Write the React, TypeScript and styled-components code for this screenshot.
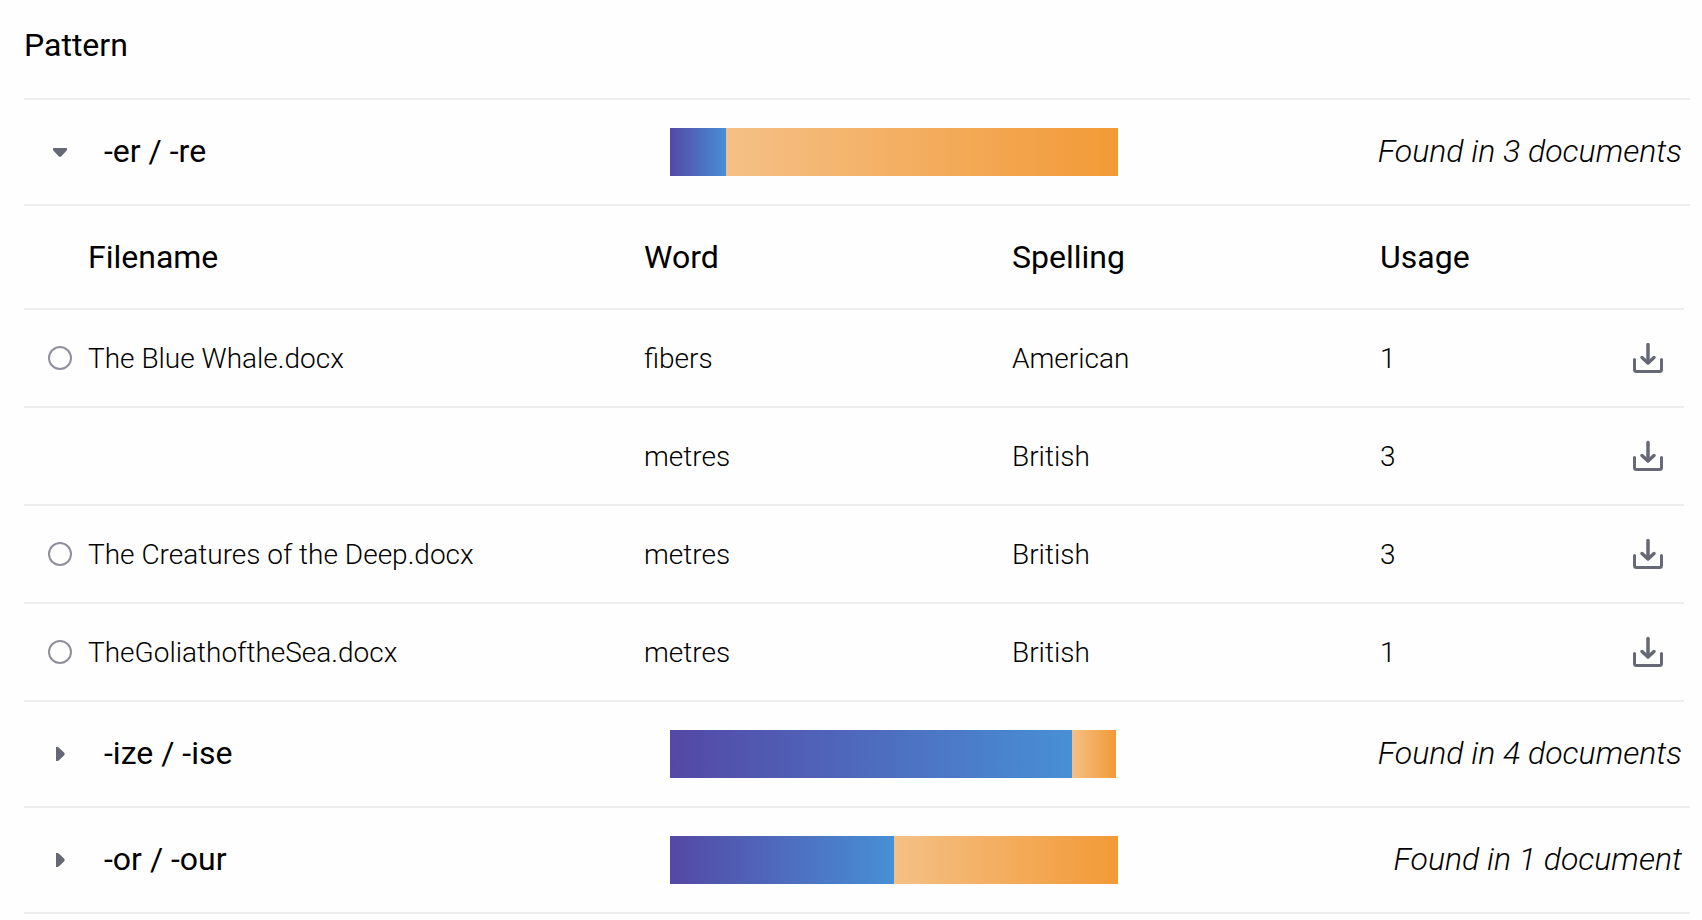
import React, { useState } from "react";
import styled, { createGlobalStyle } from "styled-components";

const GlobalStyle = createGlobalStyle`
  *, *::before, *::after { box-sizing: border-box; }
  body {
    margin: 0;
    background: #fefefe;
    color: #000;
    font-family: Roboto, "Liberation Sans", sans-serif;
    font-size: 32px;
    line-height: 42px;
  }
`;

const line = "2px solid #eee";
const iconColor = "#666876";

const Page = styled.main`
  padding: 0 12px 0 24px;
`;

const Title = styled.h1`
  margin: 0;
  padding: 24px 0 32px;
  border-bottom: ${line};
  font-size: 32px;
  font-weight: 400;
`;

const PatternHeader = styled.div`
  display: grid;
  grid-template-columns: 323fr 224fr 286fr;
  align-items: center;
  padding: 28px 0;
  border-bottom: ${line};
`;

const PatternName = styled.div`
  display: flex;
  align-items: center;
  gap: 20px;
  padding-left: 12px;
`;

const PatternLabel = styled.h2`
  margin: 0;
  padding-bottom: 2px;
  font-size: 32px;
  font-weight: 400;
`;

const IconButton = styled.button`
  display: flex;
  align-items: center;
  justify-content: center;
  width: 48px;
  height: 48px;
  padding: 0;
  border: 0;
  background: none;
  color: ${iconColor};
  cursor: pointer;
`;

const Bar = styled.div`
  display: flex;
  height: 48px;
`;

const Segment = styled.div<{ $tone: "american" | "british" }>`
  background: ${({ $tone }) =>
    $tone === "american"
      ? "linear-gradient(to right, #5448a5, #488fd6)"
      : "linear-gradient(to right, #f4c086, #f29a36)"};
`;

const Found = styled.em`
  padding: 0 8px 2px 0;
  font-weight: 300;
  text-align: right;
`;

const Table = styled.table`
  display: block;
  margin-right: 6px;
`;

const Section = styled.thead`
  display: block;
`;

const Row = styled.tr`
  display: grid;
  grid-template-columns: 64px 139fr 92fr 92fr 58fr 72px;
  align-items: center;
  border-bottom: ${line};
`;

const HeadCell = styled.th`
  padding: 30px 0;
  font-weight: 400;
  text-align: left;
`;

const Cell = styled.td`
  padding: 2px 0 0;
  font-size: 28px;
  font-weight: 300;
`;

const ControlCell = styled.td`
  display: flex;
  align-items: center;
  justify-content: center;
  height: 96px;
  padding: 0;
`;

const SelectCell = styled(ControlCell)`
  padding-left: 8px;
`;

const Radio = styled.input`
  appearance: none;
  width: 24px;
  height: 24px;
  margin: 0;
  border: 2px solid #8f909c;
  border-radius: 50%;
  cursor: pointer;

  &:checked {
    box-shadow: inset 0 0 0 4px #fefefe;
    background: ${iconColor};
  }
`;

const Caret = ({ open }: { open: boolean }) => (
  <svg width="24" height="24" viewBox="0 0 24 24" fill="currentColor" aria-hidden="true">
    {open ? (
      <path d="M5 8h14v1.5Q19 10.3 18.3 11L13.6 16Q12 17.7 10.4 16L5.7 11Q5 10.3 5 9.5Z" />
    ) : (
      <path d="M8 5v14h1.5Q10.3 19 11 18.3L16 13.6Q17.7 12 16 10.4L11 5.7Q10.3 5 9.5 5Z" />
    )}
  </svg>
);

const DownloadIcon = () => (
  <svg
    width="32"
    height="32"
    viewBox="0 0 32 32"
    fill="none"
    stroke="currentColor"
    strokeWidth="3"
    strokeLinecap="round"
    strokeLinejoin="round"
    aria-hidden="true"
  >
    <path d="M2.5 17.5v10q0 2 2 2h23q2 0 2-2v-10" />
    <path d="M16 2.5v18" strokeWidth="3.5" />
    <path d="M10 15.5l6 5.5 6-5.5" strokeWidth="3.5" />
  </svg>
);

interface Usage {
  file?: string;
  word: string;
  spelling: string;
  count: number;
}

interface Pattern {
  label: string;
  american: number;
  british: number;
  found: string;
  rows: Usage[];
}

const patterns: Pattern[] = [
  {
    label: "-er / -re",
    american: 12.5,
    british: 87.5,
    found: "Found in 3 documents",
    rows: [
      { file: "The Blue Whale.docx", word: "fibers", spelling: "American", count: 1 },
      { word: "metres", spelling: "British", count: 3 },
      { file: "The Creatures of the Deep.docx", word: "metres", spelling: "British", count: 3 },
      { file: "TheGoliathoftheSea.docx", word: "metres", spelling: "British", count: 1 },
    ],
  },
  { label: "-ize / -ise", american: 89.7, british: 9.8, found: "Found in 4 documents", rows: [] },
  { label: "-or / -our", american: 50, british: 50, found: "Found in 1 document", rows: [] },
];

const UsageTable = ({ rows }: { rows: Usage[] }) => (
  <Table>
    <Section>
      <Row>
        <td />
        <HeadCell scope="col">Filename</HeadCell>
        <HeadCell scope="col">Word</HeadCell>
        <HeadCell scope="col">Spelling</HeadCell>
        <HeadCell scope="col">Usage</HeadCell>
        <td />
      </Row>
    </Section>
    <Section as="tbody">
      {rows.map((row, i) => (
        <Row key={i}>
          <SelectCell>
            {row.file && <Radio type="radio" name="file" id={`file-${i}`} />}
          </SelectCell>
          <Cell>{row.file && <label htmlFor={`file-${i}`}>{row.file}</label>}</Cell>
          <Cell>{row.word}</Cell>
          <Cell>{row.spelling}</Cell>
          <Cell>{row.count}</Cell>
          <ControlCell>
            <IconButton type="button" aria-label={`Download ${row.word}`}>
              <DownloadIcon />
            </IconButton>
          </ControlCell>
        </Row>
      ))}
    </Section>
  </Table>
);

const PatternGroup = ({ pattern, initiallyOpen }: { pattern: Pattern; initiallyOpen: boolean }) => {
  const [open, setOpen] = useState(initiallyOpen);
  return (
    <section>
      <PatternHeader>
        <PatternName>
          <IconButton
            type="button"
            aria-expanded={open}
            aria-label={`Toggle ${pattern.label}`}
            onClick={() => setOpen(!open)}
          >
            <Caret open={open} />
          </IconButton>
          <PatternLabel>{pattern.label}</PatternLabel>
        </PatternName>
        <Bar>
          <Segment $tone="american" style={{ width: `${pattern.american}%` }} />
          <Segment $tone="british" style={{ width: `${pattern.british}%` }} />
        </Bar>
        <Found>{pattern.found}</Found>
      </PatternHeader>
      {open && pattern.rows.length > 0 && <UsageTable rows={pattern.rows} />}
    </section>
  );
};

export default function App() {
  return (
    <>
      <GlobalStyle />
      <Page>
        <Title>Pattern</Title>
        {patterns.map((pattern, i) => (
          <PatternGroup key={pattern.label} pattern={pattern} initiallyOpen={i === 0} />
        ))}
      </Page>
    </>
  );
}
